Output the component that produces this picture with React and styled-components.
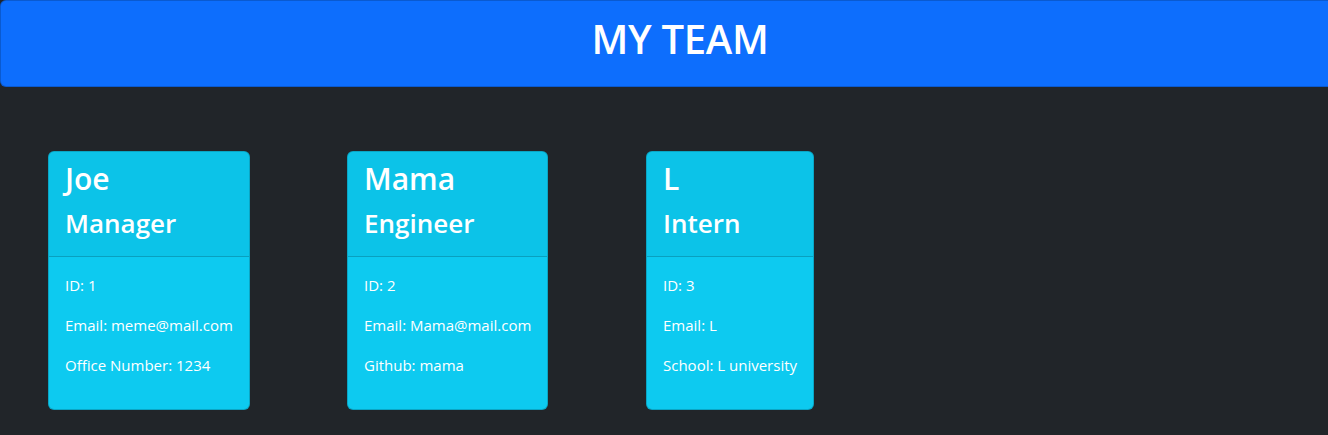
import styled, { createGlobalStyle } from "styled-components";

const GlobalStyle = createGlobalStyle`
  html, body {
    margin: 0;
    padding: 0;
    background-color: #212529;
    overflow-x: hidden;
    font-family: "Open Sans", "Noto Sans", sans-serif;
    color: #fff;
  }
`;

const Header = styled.header`
  width: calc(100% + 32px);
  box-sizing: border-box;
  background-color: #0d6efd;
  border: 1px solid rgba(0, 0, 0, 0.175);
  border-radius: 6px;
  padding: 14px 0 15px;
  text-align: center;

  h1 {
    margin: 0 0 8px;
    font-size: 40px;
    line-height: 48px;
    font-weight: 600;
    letter-spacing: -0.3px;
  }
`;

const Team = styled.main`
  display: grid;
  grid-template-columns: repeat(3, 299px);
  align-items: start;
  padding: 64px 0 0 48px;
`;

const Card = styled.article`
  justify-self: start;
  background-color: #0dcaf0;
  border: 1px solid rgba(0, 0, 0, 0.175);
  border-radius: 6px;
  overflow: hidden;
`;

const CardHeader = styled.div`
  background-color: rgba(0, 0, 0, 0.03);
  border-bottom: 1px solid rgba(0, 0, 0, 0.175);
  padding: 8px 16px;

  h2 {
    margin: 0 0 8px;
    font-size: 30px;
    line-height: 38px;
    font-weight: 600;
  }
  h3 {
    margin: 0 0 8px;
    font-size: 26px;
    line-height: 34px;
    font-weight: 600;
  }
`;

const CardBody = styled.div`
  padding: 16px;

  p {
    margin: 0 0 16px;
    font-size: 15px;
    line-height: 24px;
    white-space: nowrap;
  }
`;

const team = [
  {
    name: "Joe",
    role: "Manager",
    id: 1,
    email: "meme@mail.com",
    extra: "Office Number: 1234",
  },
  {
    name: "Mama",
    role: "Engineer",
    id: 2,
    email: "Mama@mail.com",
    extra: "Github: mama",
  },
  {
    name: "L",
    role: "Intern",
    id: 3,
    email: "L",
    extra: "School: L university",
  },
];

const MemberCard = ({ member }) => (
  <Card>
    <CardHeader>
      <h2>{member.name}</h2>
      <h3>{member.role}</h3>
    </CardHeader>
    <CardBody>
      <p>ID: {member.id}</p>
      <p>Email: {member.email}</p>
      <p>{member.extra}</p>
    </CardBody>
  </Card>
);

const App = () => (
  <>
    <GlobalStyle />
    <Header>
      <h1>MY TEAM</h1>
    </Header>
    <Team>
      {team.map((member) => (
        <MemberCard key={member.id} member={member} />
      ))}
    </Team>
  </>
);

export default App;
